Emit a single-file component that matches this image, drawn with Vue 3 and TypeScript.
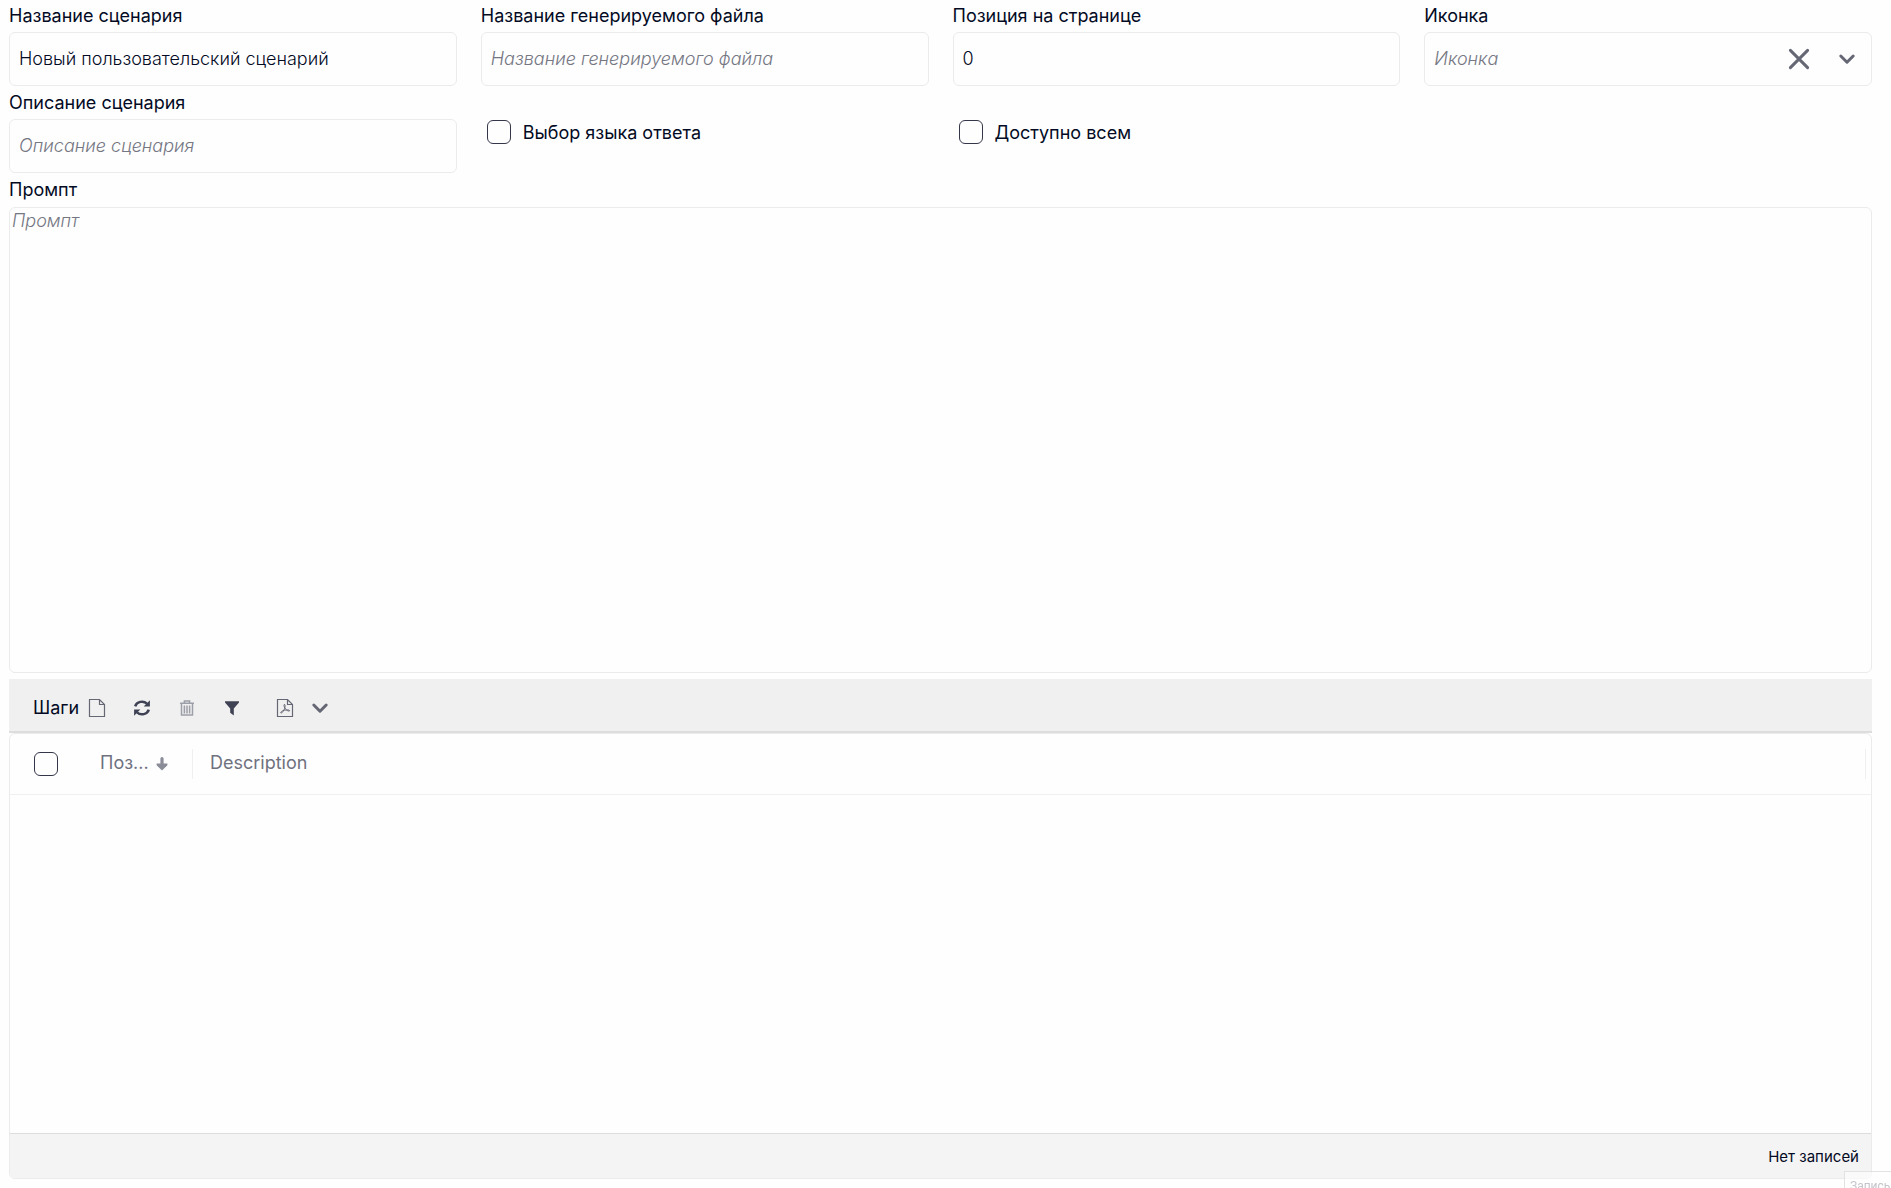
<script setup lang="ts">
import { ref } from 'vue'

const title = ref('Новый пользовательский сценарий')
const fileName = ref('')
const position = ref('0')
const icon = ref('')
const description = ref('')
const languageChoice = ref(false)
const availableToAll = ref(false)
const prompt = ref('')
const allSelected = ref(false)
</script>

<template>
  <main class="page">
    <form class="form" @submit.prevent>
      <div class="field">
        <label for="title">Название сценария</label>
        <input id="title" v-model="title" class="box" type="text" />
      </div>
      <div class="field">
        <label for="file-name">Название генерируемого файла</label>
        <input id="file-name" v-model="fileName" class="box" type="text" placeholder="Название генерируемого файла" />
      </div>
      <div class="field">
        <label for="position">Позиция на странице</label>
        <input id="position" v-model="position" class="box" type="text" inputmode="numeric" />
      </div>
      <div class="field">
        <label for="icon">Иконка</label>
        <div class="box combo">
          <select id="icon" v-model="icon" :class="{ empty: !icon }">
            <option value="">Иконка</option>
          </select>
          <button type="button" class="combo-btn" aria-label="Очистить" @click="icon = ''">
            <svg width="24" height="24" viewBox="0 0 24 24" fill="none" stroke="#656775" stroke-width="3" stroke-linecap="round">
              <path d="M3.4 3.4l17.200 17.200M20.600 3.400L3.400 20.600" />
            </svg>
          </button>
          <button type="button" class="combo-btn" aria-label="Открыть список">
            <svg width="24" height="24" viewBox="0 0 24 24" fill="none" stroke="#656775" stroke-width="3" stroke-linecap="round" stroke-linejoin="round">
              <path d="M5.800 9l6.200 6.200L18.200 9" />
            </svg>
          </button>
        </div>
      </div>
      <div class="field">
        <label for="description">Описание сценария</label>
        <input id="description" v-model="description" class="box" type="text" placeholder="Описание сценария" />
      </div>
      <label class="check">
        <input v-model="languageChoice" type="checkbox" />
        <span>Выбор языка ответа</span>
      </label>
      <label class="check">
        <input v-model="availableToAll" type="checkbox" />
        <span>Доступно всем</span>
      </label>
      <div class="field wide">
        <label for="prompt">Промпт</label>
        <textarea id="prompt" v-model="prompt" class="box" placeholder="Промпт"></textarea>
      </div>
    </form>

    <section class="steps">
      <header class="toolbar">
        <h2>Шаги</h2>
        <button type="button" aria-label="Создать">
          <svg width="20" height="20" viewBox="0 0 20 20" fill="none" stroke="#656775" stroke-width="1.2">
            <path d="M2.500 1.500h10l5 5v12h-15zM12.500 1.500v5h5" />
          </svg>
        </button>
        <button type="button" aria-label="Обновить">
          <svg width="20" height="20" viewBox="0 0 20 20" fill="none" stroke="#3f4254" stroke-width="2.5">
            <path d="M3.200 8.300A7 6.200 0 0 1 15 5.600" />
            <path d="M16.800 11.700A7 6.200 0 0 1 5 14.400" />
            <path d="M17.900 2.200v6.200h-6.200zM2.100 17.800v-6.200h6.200z" fill="#3f4254" stroke="none" />
          </svg>
        </button>
        <button type="button" aria-label="Удалить" disabled>
          <svg width="20" height="20" viewBox="0 0 20 20" fill="none" stroke="#9d9fa8" stroke-width="1.5">
            <path d="M3 5.200h14M7.400 4.800V3h5.200v1.800M4.500 5.400v11.700h11V5.400M7.400 7.400v8M10 7.400v8M12.600 7.400v8" />
          </svg>
        </button>
        <button type="button" aria-label="Фильтр">
          <svg width="20" height="20" viewBox="0 0 20 20" fill="#3f4254">
            <path d="M3 3.200h14v1.400l-5.200 6v6.800l-3.600-2.600v-4.200L3 4.600z" />
          </svg>
        </button>
        <button type="button" class="export" aria-label="Экспорт в PDF">
          <svg width="20" height="20" viewBox="0 0 20 20" fill="none" stroke="#656775" stroke-width="1.2">
            <path d="M2.500 1.500h10l5 5v12h-15zM12.500 1.500v5h5" />
            <path d="M9.300 6.400c1.200 0 .9 2.200.2 4.200-.8 2.200-2.400 4.700-3.600 4.500-.9-.5.8-2.300 3.600-2.900 2.200-.5 5-.5 5.200.5-.3 1-2.800 0-4-1.500C9.500 9.800 8.400 7 9.300 6.400z" stroke-width="1" />
          </svg>
        </button>
        <button type="button" class="more" aria-label="Ещё">
          <svg width="20" height="20" viewBox="0 0 20 20" fill="none" stroke="#656775" stroke-width="3" stroke-linecap="round" stroke-linejoin="round">
            <path d="M3.800 7l6.200 6.200L16.200 7" />
          </svg>
        </button>
      </header>

      <div class="grid">
        <div class="grid-body">
          <table>
            <thead>
              <tr>
                <th class="select-col"><input v-model="allSelected" type="checkbox" aria-label="Выбрать все" /></th>
                <th class="position-col">
                  <div class="cell">
                    <span>Поз...</span>
                    <svg width="12" height="14" viewBox="0 0 12 14" fill="#8a8c98">
                      <path d="M4.400 1.600a1.600 1.600 0 0 1 3.200 0v5h3.800v1.600L6 13.400.600 8.200V6.600h3.800z" />
                    </svg>
                  </div>
                </th>
                <th><div class="cell last"><span>Description</span></div></th>
              </tr>
            </thead>
          </table>
        </div>
        <footer>Нет записей</footer>
      </div>
    </section>

    <div class="toast" role="status">Запись</div>
  </main>
</template>

<style>
body {
  margin: 0;
  background: #fefefe;
}
</style>

<style scoped>
.page {
  display: flex;
  flex-direction: column;
  box-sizing: border-box;
  height: 100vh;
  padding: 0 19px 9px 9px;
  overflow: hidden;
  color: #030a24;
  font-family: Inter, "Liberation Sans", sans-serif;
  font-size: 18px;
  line-height: 24px;
}

.form {
  flex: none;
  display: grid;
  grid-template-columns: repeat(4, minmax(0, 1fr));
  gap: 1px 24px;
}

.field {
  display: flex;
  flex-direction: column;
}

.field > label {
  line-height: 32px;
}

.wide {
  grid-column: 1 / -1;
}

.wide > label {
  padding-bottom: 1px;
}

.box {
  box-sizing: border-box;
  width: 100%;
  height: 54px;
  margin: 0;
  padding: 0 9px 2px;
  border: 1px solid #ebebec;
  border-radius: 6px;
  outline: none;
  background: #fefefe;
  color: inherit;
  font: inherit;
  font-weight: 300;
}

textarea.box {
  height: 466px;
  padding: 1px 2px 2px;
  resize: none;
}

.box::placeholder {
  color: #757783;
  font-style: italic;
  opacity: 1;
}

.combo {
  display: flex;
  align-items: center;
  padding: 0 12px 0 9px;
}

.combo select {
  flex: 1;
  min-width: 0;
  padding: 0;
  border: 0;
  outline: none;
  appearance: none;
  background: none;
  color: inherit;
  font: inherit;
}

.combo select.empty {
  color: #757783;
  font-style: italic;
}

button {
  display: flex;
  padding: 0;
  border: 0;
  background: none;
}

.combo-btn + .combo-btn {
  margin-left: 24px;
}

input[type="checkbox"] {
  box-sizing: border-box;
  width: 24px;
  height: 24px;
  margin: 0;
  border: 1px solid #34374a;
  border-radius: 6px;
  appearance: none;
  background: #fefefe;
}

input[type="checkbox"]:checked {
  background: #3f4254;
}

.check {
  display: flex;
  align-items: center;
  align-self: start;
  gap: 12px;
  height: 24px;
  margin: 33px 0 0 6px;
}

.check span {
  padding-top: 2px;
}

.steps {
  flex: 1;
  display: flex;
  flex-direction: column;
  min-height: 0;
  margin-top: 6px;
}

.toolbar {
  display: flex;
  align-items: center;
  box-sizing: border-box;
  height: 54px;
  padding: 6px 24px 0;
  border-bottom: 2px solid #dddddd;
  background: #f0f0f0;
}

.toolbar h2 {
  margin: 0 8px 0 0;
  font-size: 18px;
  font-weight: 400;
}

.toolbar button {
  margin-right: 25px;
}

.toolbar .export {
  margin: 0 15px 0 8px;
}

.grid {
  flex: 1;
  display: flex;
  flex-direction: column;
  border: 1px solid #ebebec;
  border-radius: 6px;
  overflow: hidden;
}

.grid-body {
  flex: 1;
}

table {
  width: 100%;
  border-collapse: collapse;
  table-layout: fixed;
}

th {
  height: 60px;
  padding: 0;
  border-bottom: 1px solid #f0f0f0;
  color: #6f717e;
  font-weight: 400;
  text-align: left;
}

.select-col {
  width: 73px;
  padding-left: 24px;
  box-sizing: border-box;
}

.select-col input {
  display: block;
}

.position-col {
  width: 110px;
}

.cell {
  display: flex;
  align-items: center;
  gap: 7px;
  height: 30px;
  padding-left: 17px;
  border-right: 1px solid #f0f0f0;
}

.cell span {
  padding-bottom: 2px;
}

.cell.last {
  margin-right: 5px;
}

footer {
  box-sizing: border-box;
  height: 45px;
  padding: 0 12px;
  border-top: 1px solid #dddddd;
  background: #f4f4f4;
  font-size: 15px;
  line-height: 45px;
  text-align: right;
}

.toast {
  position: fixed;
  right: 0;
  bottom: -11px;
  box-sizing: border-box;
  width: 47px;
  height: 28px;
  padding-left: 5px;
  border: 1px solid #e2e2e2;
  border-right: 0;
  background: rgba(254, 254, 254, 0.6);
  color: #c4c5ca;
  font-family: Roboto, "Liberation Sans", sans-serif;
  font-size: 12px;
  line-height: 28px;
}
</style>
